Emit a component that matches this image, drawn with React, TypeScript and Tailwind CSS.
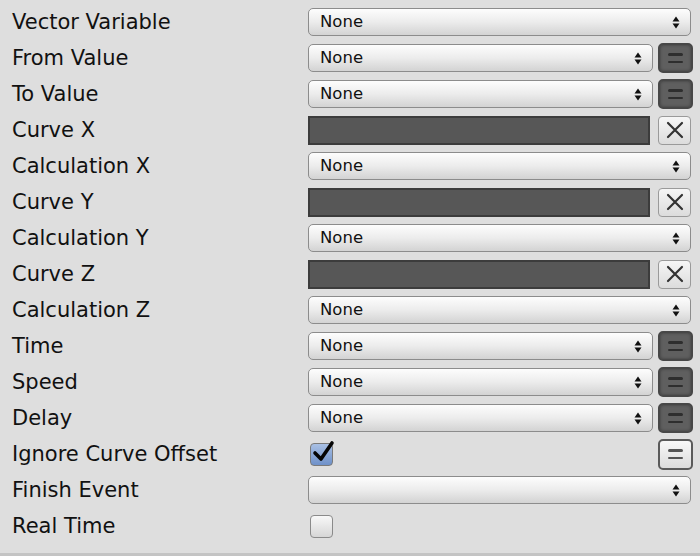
import React from 'react'

type Row =
  | { label: string; kind: 'select'; value: string; extra?: 'dark' }
  | { label: string; kind: 'curve' }
  | { label: string; kind: 'check'; checked: boolean; extra?: 'light' }

const rows: Row[] = [
  { label: 'Vector Variable', kind: 'select', value: 'None' },
  { label: 'From Value', kind: 'select', value: 'None', extra: 'dark' },
  { label: 'To Value', kind: 'select', value: 'None', extra: 'dark' },
  { label: 'Curve X', kind: 'curve' },
  { label: 'Calculation X', kind: 'select', value: 'None' },
  { label: 'Curve Y', kind: 'curve' },
  { label: 'Calculation Y', kind: 'select', value: 'None' },
  { label: 'Curve Z', kind: 'curve' },
  { label: 'Calculation Z', kind: 'select', value: 'None' },
  { label: 'Time', kind: 'select', value: 'None', extra: 'dark' },
  { label: 'Speed', kind: 'select', value: 'None', extra: 'dark' },
  { label: 'Delay', kind: 'select', value: 'None', extra: 'dark' },
  { label: 'Ignore Curve Offset', kind: 'check', checked: true, extra: 'light' },
  { label: 'Finish Event', kind: 'select', value: '' },
  { label: 'Real Time', kind: 'check', checked: false },
]

const Arrows = () => (
  <svg width="8" height="13" viewBox="0 0 8 13" className="shrink-0">
    <path d="M4 0.5 L7.5 5.5 L0.5 5.5 Z" fill="#111" />
    <path d="M4 12.5 L7.5 7.5 L0.5 7.5 Z" fill="#111" />
  </svg>
)

const Select = ({ value }: { value: string }) => (
  <div className="flex h-[28px] flex-1 items-center justify-between rounded-[5px] border-[1.5px] border-[#8c8c8c] bg-gradient-to-b from-[#fdfdfd] via-[#ececec] to-[#d3d3d3] pl-[11px] pr-[10px]">
    <span className="pt-[1px] text-[16.5px] leading-none text-[#111]">{value}</span>
    <Arrows />
  </div>
)

const DarkToggle = () => (
  <div className="ml-[5px] flex h-[30px] w-[35px] shrink-0 flex-col items-center justify-center gap-[5px] rounded-[5px] border-2 border-[#474747] bg-[#5f5f5f] shadow-[inset_0_0_3px_#3a3a3a]">
    <div className="h-[2.5px] w-[15px] rounded-full bg-[#2e2e2e]" />
    <div className="h-[2.5px] w-[15px] rounded-full bg-[#2e2e2e]" />
  </div>
)

const LightToggle = () => (
  <div className="flex h-[31px] w-[35px] shrink-0 flex-col items-center justify-center gap-[5px] rounded-[5px] border-2 border-[#5a5a5a] bg-gradient-to-b from-[#f8f8f8] to-[#dcdcdc]">
    <div className="h-[2.5px] w-[15px] rounded-full bg-[#555]" />
    <div className="h-[2.5px] w-[15px] rounded-full bg-[#555]" />
  </div>
)

const ClearButton = () => (
  <div className="ml-[8px] flex h-[29px] w-[33px] shrink-0 items-center justify-center rounded-[4px] border-[1.5px] border-[#9a9a9a] bg-gradient-to-b from-[#f6f6f6] to-[#dcdcdc]">
    <svg width="18" height="18" viewBox="0 0 18 18">
      <path d="M2 2 L16 16 M16 2 L2 16" stroke="#333" strokeWidth="2.2" strokeLinecap="round" />
    </svg>
  </div>
)

const Checkbox = ({ checked }: { checked: boolean }) => (
  <div
    className={
      checked
        ? 'relative ml-[2px] h-[23px] w-[23px] rounded-[4px] border-[1.5px] border-[#7a7a7a] bg-gradient-to-b from-[#a9c0e4] to-[#6f91c9]'
        : 'relative ml-[2px] h-[23px] w-[23px] rounded-[4px] border-[1.5px] border-[#8a8a8a] bg-gradient-to-b from-[#f8f8f8] to-[#d6d6d6]'
    }
  >
    {checked && (
      <svg width="24" height="24" viewBox="0 0 24 24" className="absolute -top-[4px] left-[1px]">
        <path d="M3 13 L9 19 L20 3" stroke="#050505" strokeWidth="3.6" fill="none" strokeLinecap="round" strokeLinejoin="round" />
      </svg>
    )}
  </div>
)

export default function App() {
  return (
    <div
      className="h-[556px] w-[700px] bg-[#dedede] pt-[4px]"
      style={{ fontFamily: '"DejaVu Sans", "Noto Sans", sans-serif' }}
    >
      <div className="flex h-[552px] flex-col border-b-[3px] border-[#c4c4c4]">
        {rows.map((row) => (
          <div key={row.label} className="flex h-[36px] items-center">
            <div className="w-[308px] shrink-0 pl-[12px] pt-[1px] text-[21px] leading-none text-[#111]">{row.label}</div>
            <div className="flex flex-1 items-center pr-[7px]">
              {row.kind === 'select' && (
                <>
                  <div className={row.extra ? 'mr-[0px] flex flex-1' : 'mr-[2px] flex flex-1'}>
                    <Select value={row.value} />
                  </div>
                  {row.extra === 'dark' && <DarkToggle />}
                </>
              )}
              {row.kind === 'curve' && (
                <>
                  <div className="h-[29px] flex-1 border-2 border-[#3c3c3c] bg-[#575757]" />
                  <ClearButton />
                  <div className="w-[2px]" />
                </>
              )}
              {row.kind === 'check' && (
                <div className="flex flex-1 items-center justify-between">
                  <Checkbox checked={row.checked} />
                  {row.extra === 'light' && <LightToggle />}
                </div>
              )}
            </div>
          </div>
        ))}
      </div>
    </div>
  )
}
